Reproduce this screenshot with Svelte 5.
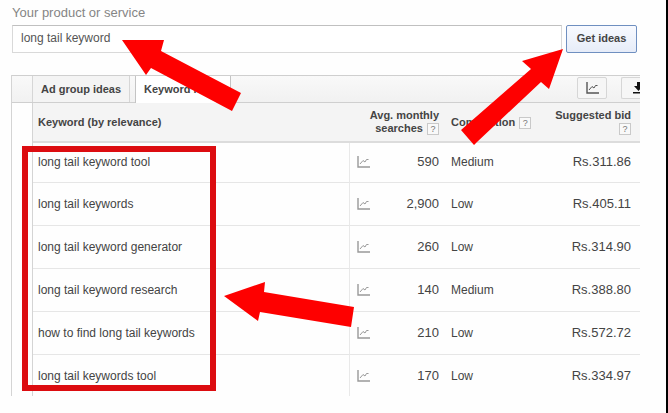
<script lang="ts">
  type Idea = { keyword: string; searches: string; competition: string; bid: string };

  let query = $state('long tail keyword');
  let activeTab = $state('keywords');

  const ideas: Idea[] = [
    { keyword: 'long tail keyword tool',         searches: '590',   competition: 'Medium', bid: 'Rs.311.86' },
    { keyword: 'long tail keywords',             searches: '2,900', competition: 'Low',    bid: 'Rs.405.11' },
    { keyword: 'long tail keyword generator',    searches: '260',   competition: 'Low',    bid: 'Rs.314.90' },
    { keyword: 'long tail keyword research',     searches: '140',   competition: 'Medium', bid: 'Rs.388.80' },
    { keyword: 'how to find long tail keywords', searches: '210',   competition: 'Low',    bid: 'Rs.572.72' },
    { keyword: 'long tail keywords tool',        searches: '170',   competition: 'Low',    bid: 'Rs.334.97' }
  ];
</script>

{#snippet chartIcon()}
  <svg class="chart" viewBox="0 0 13 12" width="13" height="12" aria-hidden="true">
    <path d="M1 0V11H13" fill="none" stroke="currentColor" stroke-width="1.4" />
    <path d="M3 8L6 4.5L8 6L9.5 3.5L11.5 3.5" fill="none" stroke="currentColor" />
  </svg>
{/snippet}

<div class="page">
  <form class="search" onsubmit={(e) => e.preventDefault()}>
    <label for="product">Your product or service</label>
    <div class="search-row">
      <input id="product" type="text" bind:value={query} />
      <button class="submit" type="submit">Get ideas</button>
    </div>
  </form>

  <main class="panel">
    <div class="toolbar">
      <div class="tabs">
        <button class="tab" class:active={activeTab === 'groups'} onclick={() => (activeTab = 'groups')}>Ad group ideas</button>
        <button class="tab" class:active={activeTab === 'keywords'} onclick={() => (activeTab = 'keywords')}>Keyword ideas</button>
      </div>
      <div class="tools">
        <button class="tool" aria-label="Chart">{@render chartIcon()}</button>
        <button class="tool cut" aria-label="Download">
          <svg viewBox="0 0 10 12" width="10" height="12" aria-hidden="true">
            <path d="M4 0H7V4H10L5.5 9L1 4H4ZM0 10H10V11.5H0Z" fill="#111" />
          </svg>
        </button>
      </div>
    </div>

    <div class="results">
      <table>
        <colgroup>
          <col />
          <col class="c-chart" />
          <col class="c-searches" />
          <col class="c-competition" />
          <col class="c-bid" />
        </colgroup>
        <thead>
          <tr>
            <th colspan="2">Keyword (by relevance)</th>
            <th class="num">Avg. monthly searches <span class="help">?</span></th>
            <th>Competition <span class="help">?</span></th>
            <th class="num">Suggested bid <span class="help">?</span></th>
          </tr>
        </thead>
        <tbody>
          {#each ideas as idea}
            <tr>
              <td>{idea.keyword}</td>
              <td class="trend">{@render chartIcon()}</td>
              <td class="num">{idea.searches}</td>
              <td>{idea.competition}</td>
              <td class="num">{idea.bid}</td>
            </tr>
          {/each}
        </tbody>
      </table>
      <div class="highlight"></div>
    </div>
  </main>

  <!-- Red arrows lying over the form and the table -->
  <svg class="arrow to-input" viewBox="0 0 120 72" width="120" height="72" aria-hidden="true">
    <polygon points="0,0 42,0 39,11 119,53 110,71 29,28 24,35" />
  </svg>
  <svg class="arrow to-button" viewBox="0 0 103 97" width="103" height="97" aria-hidden="true">
    <polygon points="102,0 88,40 80,33 16,93 13,96 0,81 70,20 61,12" />
  </svg>
  <svg class="arrow to-list" viewBox="0 0 131 46" width="131" height="46" aria-hidden="true">
    <polygon points="0,14 41,0 40,10 130,25 127,45 36,30 34,39" />
  </svg>
</div>

<style>
  :global(body) {
    background: #fefefe;
  }

  .page {
    position: relative;
    box-sizing: border-box;
    min-height: 100vh;
    padding-top: 5px;
    border-right: 2px solid #000;
    font-family: "Liberation Sans", Arial, sans-serif;
    font-size: 12px;
    color: #444;
    overflow: hidden;
  }

  button,
  input {
    box-sizing: border-box;
    font-family: inherit;
    margin: 0;
  }

  /* Search form */
  .search {
    padding: 0 29px 22px 12px;
  }
  .search label {
    display: block;
    font-size: 13px;
    line-height: 16px;
    margin-bottom: 4px;
    color: #858585;
  }
  .search-row {
    display: flex;
    gap: 4px;
  }
  .search input {
    flex: 1;
    min-width: 0;
    height: 28px;
    padding: 0 8px 2px;
    border: 1px solid #d9d9d9;
    border-top-color: #c0c0c0;
    background: #fff;
    font-size: 12px;
    color: #555;
  }
  .submit {
    width: 71px;
    height: 28px;
    padding: 0 0 2px;
    border: 1px solid #6f8fc0;
    border-radius: 2px;
    background: linear-gradient(#f8faff, #e6ecf8);
    font-size: 11px;
    font-weight: 700;
    color: #444;
  }

  /* Tabs and tool buttons */
  .panel {
    margin: 0 26px 0 11px;
    border-left: 1px solid #d4d4d4;
  }
  .toolbar {
    display: flex;
    justify-content: space-between;
    height: 28px;
    box-sizing: border-box;
    padding-left: 20px;
    border-top: 1px solid #cfcfcf;
    border-bottom: 1px solid #cfcfcf;
    background: linear-gradient(#f9f9f9, #f1f1f1);
  }
  .tabs {
    display: flex;
    gap: 5px;
  }
  .tab {
    height: 26px;
    padding: 0 8px;
    border: 1px solid #d6d6d6;
    border-width: 0 1px;
    background: #f4f4f4;
    font-size: 11px;
    font-weight: 700;
    color: #444;
  }
  .tab.active {
    height: 27px;
    padding-bottom: 1px;
    background: #fff;
    border-color: #c4c4c4;
  }
  .tools {
    display: flex;
    gap: 14px;
    padding-top: 1px;
  }
  .tool {
    display: flex;
    align-items: center;
    justify-content: center;
    width: 30px;
    height: 22px;
    padding: 0;
    border: 1px solid #d6d6d6;
    border-radius: 2px;
    background: #f6f6f6;
    color: #555;
  }
  .tool.cut {
    justify-content: flex-end;
    width: 19px;
    overflow: hidden;
    border-right: 0;
    border-radius: 2px 0 0 2px;
  }
  .tool.cut svg {
    flex: none;
    margin-right: -3px;
  }

  /* Results table */
  .results {
    position: relative;
    margin-left: 20px;
  }
  table {
    width: 100%;
    table-layout: fixed;
    border-collapse: separate;
    border-spacing: 0;
    border-left: 1px solid #d4d4d4;
  }
  .c-chart       { width: 19px; }
  .c-searches    { width: 77px; }
  .c-competition { width: 100px; }
  .c-bid         { width: 95px; }

  th {
    height: 38px;
    padding: 0 6px;
    border-bottom: 2px solid #dcdcdc;
    background: #f4f4f4;
    font-size: 11px;
    line-height: 13px;
    text-align: left;
    color: #444;
  }
  th:first-child,
  td:first-child {
    padding-left: 5px;
  }
  th.num { padding-left: 0; }
  td {
    height: 42px;
    padding: 0 6px;
    border-bottom: 1px solid #e6e6e6;
    line-height: 16px;
    white-space: nowrap;
  }
  tbody tr:first-child td {
    height: 37px;
    padding-bottom: 2px;
  }
  tbody tr:last-child td {
    height: 41px;
    border-bottom: 0;
  }
  .num {
    text-align: right;
  }
  td.num {
    font-size: 13px;
  }
  th:last-child,
  td:last-child {
    padding-right: 9px;
  }
  td.trend {
    padding-right: 0;
    padding-left: 7px;
    border-left: 1px solid #e9e9e9;
    color: #999;
  }
  .chart {
    display: block;
  }
  .help {
    display: inline-block;
    box-sizing: border-box;
    width: 12px;
    height: 12px;
    margin-left: 1px;
    border: 1px solid #c9c9c9;
    background: #f9f9f9;
    font-size: 9px;
    font-weight: 400;
    line-height: 10px;
    text-align: center;
    vertical-align: bottom;
    color: #777;
  }

  /* Frame round the keyword column */
  .highlight {
    position: absolute;
    box-sizing: border-box;
    top: 43px;
    bottom: 5px;
    left: -10px;
    width: 194px;
    border: 6px solid #dc0c10;
  }

  .arrow {
    position: absolute;
    fill: #fe0000;
  }
  .to-input  { top: 40px; left: 122px; }
  .to-button { top: 49px; right: 102px; }
  .to-list   { top: 282px; left: 224px; }
</style>
